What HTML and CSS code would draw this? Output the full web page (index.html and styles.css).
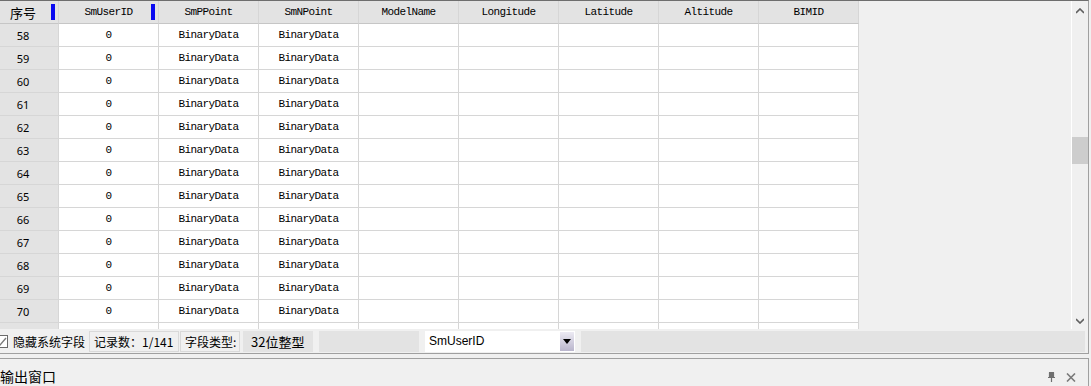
FILE: index.html
```html
<!DOCTYPE html>
<html lang="zh">
<head>
  <meta charset="UTF-8" />
  <title>属性表</title>
  <link rel="stylesheet" href="styles.css">
</head>
<body>
  <div class="panel">
    <div class="pane">
      <div class="grid-wrap">
        <div class="grid" id="grid">
          <div class="cell head rowhead">序号<span class="mark"></span></div>
          <div class="cell head">SmUserID<span class="mark"></span></div>
          <div class="cell head">SmPPoint</div>
          <div class="cell head">SmNPoint</div>
          <div class="cell head">ModelName</div>
          <div class="cell head">Longitude</div>
          <div class="cell head">Latitude</div>
          <div class="cell head">Altitude</div>
          <div class="cell head">BIMID</div>
        </div>
      </div>
      <div class="vscroll">
        <svg class="arrow" width="8" height="6" viewBox="0 0 8 6"><path d="M0 5 L4 1 L8 5" fill="none" stroke="#606060" stroke-width="1.6"/></svg>
        <div class="thumb"></div>
        <svg class="arrow down" width="8" height="6" viewBox="0 0 8 6"><path d="M0 1 L4 5 L8 1" fill="none" stroke="#606060" stroke-width="1.6"/></svg>
      </div>
    </div>
    <div class="statusbar">
      <label class="check">
        <span class="box"><svg width="11" height="11" viewBox="0 0 11 11"><path d="M1 6 L4 9 L10 2" fill="none" stroke="#7a7a7a" stroke-width="1.4"/></svg></span>
        隐藏系统字段
      </label>
      <div class="field framed w-count">记录数：1/141</div>
      <div class="field framed w-type">字段类型:</div>
      <div class="field shaded w-value">32位整型</div>
      <div class="field shaded w-empty"></div>
      <div class="combo">
        <span>SmUserID</span>
        <span class="drop"><svg width="8" height="5" viewBox="0 0 8 5"><path d="M0 0 H8 L4 5 Z" fill="#000"/></svg></span>
      </div>
      <div class="field shaded w-rest"></div>
    </div>
  </div>

  <div class="output">
    <div class="title">输出窗口</div>
    <div class="tools">
      <svg width="9" height="10" viewBox="0 0 9 10"><path d="M2 0.5 H7 M2.5 0.5 V5 M6.5 0.5 V5 M1 5.5 H8 M4.5 5.5 V10" fill="none" stroke="#6f6f6f" stroke-width="1.2"/><rect x="3" y="1" width="3" height="4" fill="#6f6f6f"/></svg>
      <svg width="10" height="9" viewBox="0 0 10 9"><path d="M1 0.5 L9 8.5 M9 0.5 L1 8.5" fill="none" stroke="#7a7a7a" stroke-width="1.6"/></svg>
    </div>
  </div>

  <script>
    const grid = document.getElementById('grid');
    for (let n = 58; n <= 70; n++) {
      grid.innerHTML += `
        <div class="cell rowhead">${n}</div>
        <div class="cell">0</div>
        <div class="cell">BinaryData</div>
        <div class="cell">BinaryData</div>
        <div class="cell"></div>
        <div class="cell"></div>
        <div class="cell"></div>
        <div class="cell"></div>
        <div class="cell"></div>`;
    }
    // next row is scrolled out of view, only its top edge shows
    grid.innerHTML += '<div class="cell rowhead"></div>' + '<div class="cell"></div>'.repeat(8);
  </script>
</body>
</html>
```

FILE: styles.css
```css
body {
  margin: 0;
  background: #f0f0f0;
  font-family: "Noto Sans", "Noto Sans CJK SC", sans-serif;
  font-size: 12px;
  color: #000;
  overflow: hidden;
}

.panel {
  width: 1088px;
  border-top: 1px solid #6e6e6e;
  border-right: 1px solid #a0a0a0;
  border-bottom: 1px solid #a0a0a0;
}

.pane {
  display: flex;
  height: 328px;
}

.grid-wrap {
  flex: 1;
  overflow: hidden;
}

.grid {
  display: grid;
  grid-template-columns: 59px repeat(8, 100px);
  grid-auto-rows: 23px;
}

.cell {
  position: relative;
  display: flex;
  align-items: center;
  justify-content: center;
  background: #fff;
  border-right: 1px solid #d6d6d6;
  border-bottom: 1px solid #d6d6d6;
  font-family: "Liberation Mono", monospace;
  font-size: 11px;
  letter-spacing: -0.6px;
  white-space: nowrap;
}

.head {
  background: #e3e3e3;
  border-bottom-color: #c6c6c6;
}

.rowhead {
  background: #e3e3e3;
  padding-right: 12px;
  font-family: "Noto Sans", "Noto Sans CJK SC", sans-serif;
  font-size: 11px;
  letter-spacing: 0;
}

.head.rowhead {
  font-size: 13px;
}

.mark {
  position: absolute;
  right: 3px;
  top: 3px;
  width: 4px;
  height: 16px;
  background: #0a0af0;
}

.vscroll {
  width: 16px;
  border-left: 1px solid #fff;
  position: relative;
}

.arrow {
  position: absolute;
  left: 4px;
  top: 7px;
}

.arrow.down {
  top: auto;
  bottom: 5px;
}

.thumb {
  position: absolute;
  top: 136px;
  left: 0;
  width: 16px;
  height: 27px;
  background: #cdcdcd;
}

.statusbar {
  display: flex;
  align-items: flex-start;
  height: 22px;
  padding-top: 2px;
}

.check {
  display: flex;
  align-items: center;
  height: 21px;
  margin-left: -5px;
  margin-right: 4px;
  font-family: "Noto Sans CJK SC", sans-serif;
  font-size: 12px;
  color: #000;
}

.box {
  display: flex;
  width: 11px;
  height: 11px;
  border: 1px solid #6a6a6a;
  background: #fff;
  margin-right: 5px;
}

.field {
  box-sizing: border-box;
  height: 21px;
  display: flex;
  align-items: center;
  padding-left: 4px;
  font-family: "Noto Sans CJK SC", sans-serif;
  font-size: 12px;
  white-space: nowrap;
}

.framed {
  border: 1px solid #d9d9d9;
  background: #f0f0f0;
}

.shaded {
  background: #e3e3e3;
}

.w-count { width: 90px; margin-right: 1px; }
.w-type { width: 60px; margin-right: 3px; }
.w-value { width: 70px; margin-right: 6px; padding-left: 8px; font-size: 13px; }
.w-empty { width: 100px; margin-right: 6px; }
.w-rest { width: 504px; }

.combo {
  box-sizing: border-box;
  width: 150px;
  height: 21px;
  margin-right: 6px;
  background: #fff;
  display: flex;
  align-items: center;
  justify-content: space-between;
  padding: 0 1px 1px 4px;
  font-family: "Liberation Sans", sans-serif;
  font-size: 12px;
}

.drop {
  width: 14px;
  height: 19px;
  margin-top: 1px;
  display: flex;
  align-items: center;
  justify-content: center;
  background: linear-gradient(#eceaf3, #b9b5cc);
}

.output {
  margin-top: 4px;
  width: 1088px;
  height: 27px;
  border-top: 1px solid #a0a0a0;
  border-right: 1px solid #a0a0a0;
  display: flex;
  justify-content: space-between;
  align-items: flex-end;
}

.title {
  font-family: "Noto Sans CJK SC", sans-serif;
  font-size: 14px;
  line-height: 18px;
  margin-bottom: 1px;
}

.tools {
  display: flex;
  gap: 10px;
  align-items: center;
  margin-right: 12px;
  margin-bottom: 4px;
}
```
